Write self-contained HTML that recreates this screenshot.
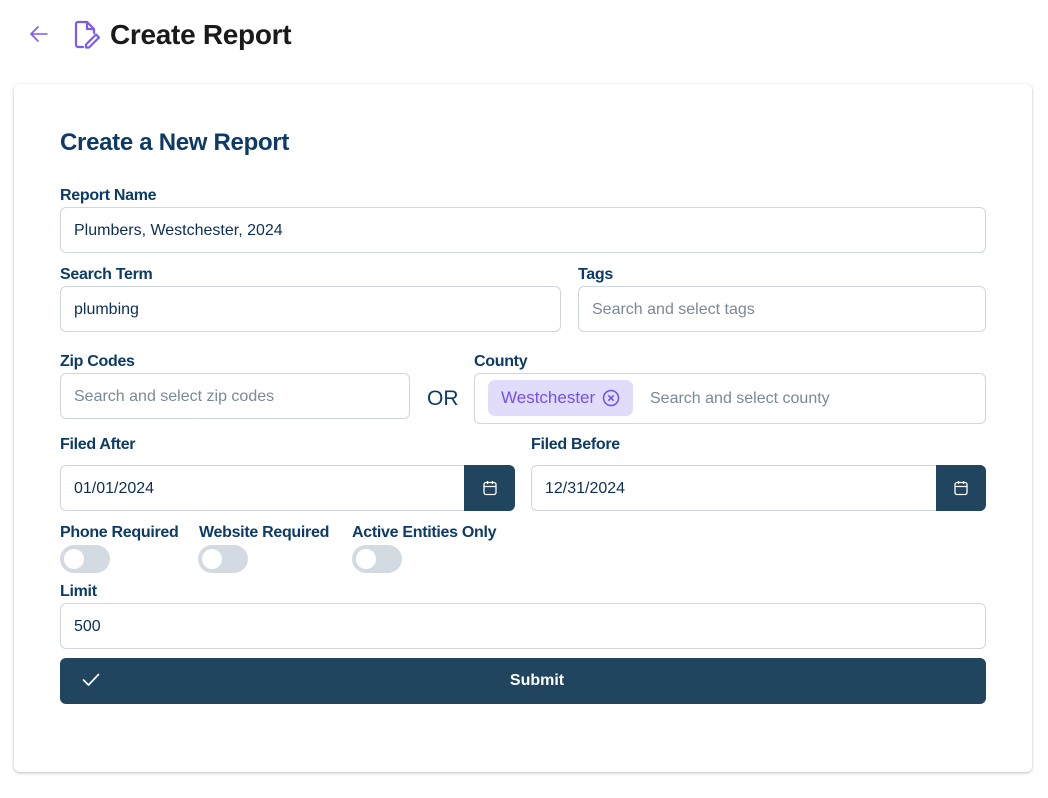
<!DOCTYPE html>
<html><head><meta charset="utf-8"><style>
*{box-sizing:border-box;margin:0;padding:0}
body{width:1048px;height:798px;background:#fff;font-family:"Liberation Sans",sans-serif;position:relative;overflow:hidden}
.a{position:absolute}
.card{left:14px;top:84px;width:1018px;height:688px;border-radius:6px;box-shadow:0 1px 3px rgba(0,0,0,.25);background:#fff}
.lbl{position:absolute;font-size:16px;font-weight:bold;color:#0d3b66;letter-spacing:-0.3px}
.inp{position:absolute;border:1px solid #cfd6df;border-radius:6px;height:46px;font-size:16px;color:#0d2f55;padding-left:13px;line-height:46px;background:#fff}
.ph{color:#7b8896}
.cal{position:absolute;background:#21445f;border-radius:0 6px 6px 0;display:flex;align-items:center;justify-content:center}
.tg{position:absolute;width:50px;height:28px;border-radius:14px;background:#d3dae2}
.tg::after{content:"";position:absolute;left:4px;top:4px;width:20px;height:20px;border-radius:50%;background:#fff}
</style></head><body>
<svg class="a" style="left:28px;top:24px" width="22" height="20" viewBox="0 0 22 20"><path d="M19 10H3M10 3L3 10l7 7" fill="none" stroke="#7c5cf0" stroke-width="1.6" stroke-linecap="round" stroke-linejoin="round"/></svg>
<svg class="a" style="left:72px;top:20px" width="30" height="30" viewBox="0 0 30 30"><path d="M11 27H6a2 2 0 0 1-2-2V4a2 2 0 0 1 2-2h9l7 7v4" fill="none" stroke="#7c5cf0" stroke-width="2.2" stroke-linejoin="round" stroke-linecap="round"/><path d="M15 2v7h7" fill="none" stroke="#7c5cf0" stroke-width="2.2" stroke-linejoin="round"/><path d="M24 14.5l3 3-10 10h-3v-3z" fill="none" stroke="#7c5cf0" stroke-width="2.2" stroke-linejoin="round"/></svg>
<div class="a" style="left:110px;top:19px;font-size:28px;font-weight:bold;color:#1a1a1a;letter-spacing:-0.3px">Create Report</div>
<div class="a card"></div>
<div class="a" style="left:60px;top:129px;font-size:24px;font-weight:bold;color:#0d3b66;letter-spacing:-0.3px">Create a New Report</div>

<div class="lbl" style="left:60px;top:187px">Report Name</div>
<div class="inp" style="left:60px;top:207px;width:926px">Plumbers, Westchester, 2024</div>

<div class="lbl" style="left:60px;top:266px">Search Term</div>
<div class="inp" style="left:60px;top:286px;width:501px">plumbing</div>
<div class="lbl" style="left:578px;top:266px">Tags</div>
<div class="inp ph" style="left:578px;top:286px;width:408px">Search and select tags</div>

<div class="lbl" style="left:60px;top:353px">Zip Codes</div>
<div class="inp ph" style="left:60px;top:373px;width:350px">Search and select zip codes</div>
<div class="a" style="left:427px;top:387px;font-size:21px;color:#0d3b66">OR</div>
<div class="lbl" style="left:474px;top:353px">County</div>
<div class="inp ph" style="left:474px;top:373px;width:512px;height:51px;line-height:49px;padding-left:175px">Search and select county</div>
<div class="a" style="left:488px;top:380px;width:145px;height:36px;border-radius:7px;background:#e2dcfb;color:#7350ea;font-size:17px;line-height:36px;padding-left:13px">Westchester<svg style="position:absolute;left:114px;top:9px" width="18" height="18" viewBox="0 0 18 18"><circle cx="9" cy="9" r="7.5" fill="none" stroke="#7350ea" stroke-width="1.5"/><path d="M6.3 6.3l5.4 5.4M11.7 6.3l-5.4 5.4" stroke="#7350ea" stroke-width="1.5"/></svg></div>

<div class="lbl" style="left:60px;top:436px">Filed After</div>
<div class="inp" style="left:60px;top:465px;width:455px">01/01/2024</div>
<div class="cal" style="left:464px;top:465px;width:51px;height:46px"><svg width="14" height="16" viewBox="0 0 14 16"><rect x="1" y="2.5" width="12" height="12" rx="2" fill="none" stroke="#fff" stroke-width="1.3"/><path d="M1 6.5h12M4.5 1v3M9.5 1v3" stroke="#fff" stroke-width="1.3"/></svg></div>
<div class="lbl" style="left:531px;top:436px">Filed Before</div>
<div class="inp" style="left:531px;top:465px;width:455px">12/31/2024</div>
<div class="cal" style="left:936px;top:465px;width:50px;height:46px"><svg width="14" height="16" viewBox="0 0 14 16"><rect x="1" y="2.5" width="12" height="12" rx="2" fill="none" stroke="#fff" stroke-width="1.3"/><path d="M1 6.5h12M4.5 1v3M9.5 1v3" stroke="#fff" stroke-width="1.3"/></svg></div>

<div class="lbl" style="left:60px;top:524px">Phone Required</div>
<div class="lbl" style="left:199px;top:524px">Website Required</div>
<div class="lbl" style="left:352px;top:524px">Active Entities Only</div>
<div class="tg" style="left:60px;top:545px"></div>
<div class="tg" style="left:198px;top:545px"></div>
<div class="tg" style="left:352px;top:545px"></div>

<div class="lbl" style="left:60px;top:583px">Limit</div>
<div class="inp" style="left:60px;top:603px;width:926px">500</div>

<div class="a" style="left:60px;top:658px;width:926px;height:46px;border-radius:6px;background:#21445f;color:#fff;font-weight:bold;font-size:16px;text-align:center;line-height:46px;padding-left:28px">Submit
<svg style="position:absolute;left:22px;top:15px" width="18" height="14" viewBox="0 0 18 14"><path d="M1.5 7l5 5L16.5 1.5" fill="none" stroke="#fff" stroke-width="1.7" stroke-linecap="round" stroke-linejoin="round"/></svg></div>
</body></html>
